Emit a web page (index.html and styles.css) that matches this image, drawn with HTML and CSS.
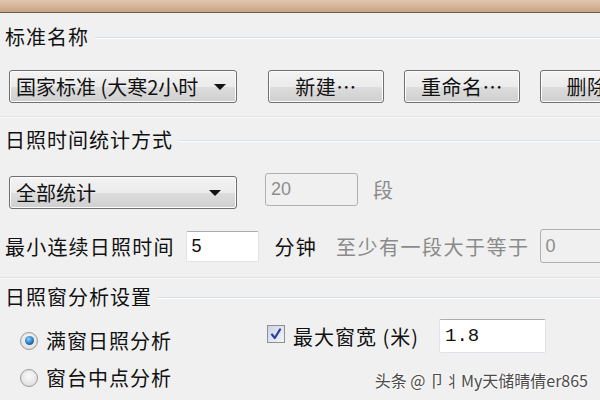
FILE: index.html
```html
<html lang="zh-CN">
  <head>
    <meta charset="UTF-8" />
    <title>日照分析设置</title>
    <link rel="stylesheet" href="styles.css">
  </head>
  <body>
    <div class="titlebar"></div>

    <div class="dialog">
      <div class="legend"><span>标准名称</span><i class="rule"></i></div>
      <div class="row row-std">
        <div class="select select-std"><span>国家标准 (大寒2小时</span><b class="arrow"></b></div>
        <div class="button">新建…</div>
        <div class="button">重命名…</div>
        <div class="button button-del">删除</div>
      </div>

      <hr class="sep" />

      <div class="legend legend-mode"><span>日照时间统计方式</span><i class="rule"></i></div>
      <div class="row row-mode">
        <div class="select select-mode"><span>全部统计</span><b class="arrow"></b></div>
        <div class="field field-off field-count">20</div>
        <span class="muted">段</span>
      </div>
      <div class="row row-min">
        <span class="label">最小连续日照时间</span>
        <div class="field field-min">5</div>
        <span class="label">分钟</span>
        <span class="muted">至少有一段大于等于</span>
        <div class="field field-off field-least">0</div>
      </div>

      <hr class="sep" />

      <div class="legend legend-window"><span>日照窗分析设置</span><i class="rule"></i></div>
      <div class="options">
        <div class="radios">
          <label class="radio on"><i class="dot"></i>满窗日照分析</label>
          <label class="radio"><i class="dot"></i>窗台中点分析</label>
        </div>
        <div class="check-row">
          <label class="check"><i class="box">
            <svg width="12" height="12" viewBox="0 0 12 12"><path d="M2 6.5 L4.8 10 L10 1.5" fill="none" stroke="#2d3f9c" stroke-width="2.2" stroke-linecap="round" stroke-linejoin="round"/></svg>
          </i>最大窗宽 (米)</label>
          <div class="field field-width">1.8</div>
        </div>
      </div>
    </div>

    <div class="watermark">头条 @ 卩丬My天储晴倩er865</div>
  </body>
</html>
```

FILE: styles.css
```css
body {
  margin: 0;
  width: 600px;
  height: 400px;
  overflow: hidden;
  background-color: #f0f0f0;
  color: #111;
  font-family: "Noto Sans CJK SC", "Liberation Sans", sans-serif;
  font-size: 20px;
  position: relative;
}

.titlebar {
  height: 12px;
  background: linear-gradient(#e2c6ae, #c9a486);
  border-bottom: 1px solid #6f5c4d;
}

.dialog {
  padding-top: 12px;
}

.legend {
  display: flex;
  align-items: center;
  gap: 6px;
  height: 24px;
  line-height: 24px;
  padding-left: 5px;
  letter-spacing: 1px;
}

.legend-mode {
  margin-top: 10px;
}

.legend-window {
  margin-top: 6px;
}

.rule {
  flex: 1;
  border-top: 1px solid #d5dfe5;
  border-bottom: 1px solid #fff;
  margin-top: 2px;
}

.sep {
  border: none;
  border-top: 1px solid #dfe3e5;
  border-bottom: 1px solid #fafafa;
  margin: 0;
}

.row {
  display: flex;
  align-items: center;
  white-space: nowrap;
  overflow: hidden;
}

.row > * {
  flex-shrink: 0;
}

.row-std {
  margin-top: 21px;
  margin-bottom: 13px;
  padding-left: 9px;
  gap: 20px;
}

.row-mode {
  margin-top: 21px;
  padding-left: 9px;
  align-items: flex-start;
}

.row-min {
  margin-top: 20px;
  margin-bottom: 14px;
  padding-left: 5px;
}

.select,
.button {
  box-sizing: border-box;
  height: 33px;
  border: 1px solid #707070;
  border-radius: 3px;
  background: linear-gradient(#f3f3f3 0%, #ebebeb 50%, #dddddd 51%, #cfcfcf 100%);
  box-shadow: inset 0 0 0 1px #fcfcfc;
  display: flex;
  align-items: center;
}

.select {
  width: 228px;
  padding: 0 6px 0 6px;
  justify-content: space-between;
}

.select-std {
  margin-right: 11px;
}

.select-mode {
  margin-top: 3px;
  margin-right: 28px;
}

.arrow {
  width: 0;
  height: 0;
  border-left: 6px solid transparent;
  border-right: 6px solid transparent;
  border-top: 6px solid #111;
  margin-right: 4px;
}

.select-mode .arrow {
  margin-right: 9px;
}

.button {
  width: 116px;
  justify-content: center;
  letter-spacing: 0.5px;
}

.button-del {
  width: 94px;
}

.field {
  box-sizing: border-box;
  height: 33px;
  background-color: #fff;
  border: 1px solid #e2e3ea;
  border-top-color: #abadb3;
  border-radius: 2px;
  padding: 0 5px;
  display: flex;
  align-items: center;
  font-family: "Liberation Sans", sans-serif;
  font-size: 18px;
  color: #111;
}

.field-off {
  background-color: #f0f0f0;
  border: 1px solid #adb2b5;
  color: #8d8d8d;
  border-radius: 3px;
}

.field-count {
  width: 93px;
  margin-right: 15px;
}

.row-mode .muted {
  line-height: 33px;
}

.muted {
  color: #8a8a8a;
  letter-spacing: 1.5px;
}

.label {
  letter-spacing: 1.2px;
}

.field-min {
  width: 73px;
  height: 31px;
  margin: 0 16px 0 11px;
}

.row-min .muted {
  margin-left: 19px;
  margin-right: 10px;
}

.field-least {
  width: 80px;
  height: 34px;
}

.options {
  display: flex;
  padding-left: 20px;
}

.radios {
  display: flex;
  flex-direction: column;
  padding-top: 13px;
  width: 247px;
}

.radio {
  display: flex;
  align-items: center;
  height: 37px;
  gap: 8px;
  letter-spacing: 1px;
}

.dot {
  box-sizing: border-box;
  width: 18px;
  height: 18px;
  border-radius: 50%;
  border: 1px solid #9a9a9a;
  background: radial-gradient(circle at 50% 40%, #fafafa, #d8d8d8);
  display: flex;
  align-items: center;
  justify-content: center;
}

.radio.on .dot::after {
  content: "";
  width: 9px;
  height: 9px;
  border-radius: 50%;
  background: radial-gradient(circle at 40% 35%, #8fd2f6, #1d6fb8 60%, #0d3f7a);
}

.check-row {
  display: flex;
  align-items: center;
  padding-top: 10px;
  height: 34px;
}

.check {
  display: flex;
  align-items: center;
  gap: 8px;
  letter-spacing: 1px;
}

.box {
  box-sizing: border-box;
  width: 18px;
  height: 18px;
  border: 1px solid #8f8f8f;
  background: linear-gradient(135deg, #cdd4e6, #f2f4fa);
  display: flex;
  align-items: center;
  justify-content: center;
  margin-top: -4px;
}

.field-width {
  width: 107px;
  height: 34px;
  margin-left: 20px;
  font-family: "Liberation Mono", monospace;
  font-size: 19px;
}

.watermark {
  position: absolute;
  right: 12px;
  bottom: 8px;
  font-size: 16px;
  color: #4a4a4a;
  text-shadow: 0 0 2px #fff, 0 0 3px #fff;
}
```
